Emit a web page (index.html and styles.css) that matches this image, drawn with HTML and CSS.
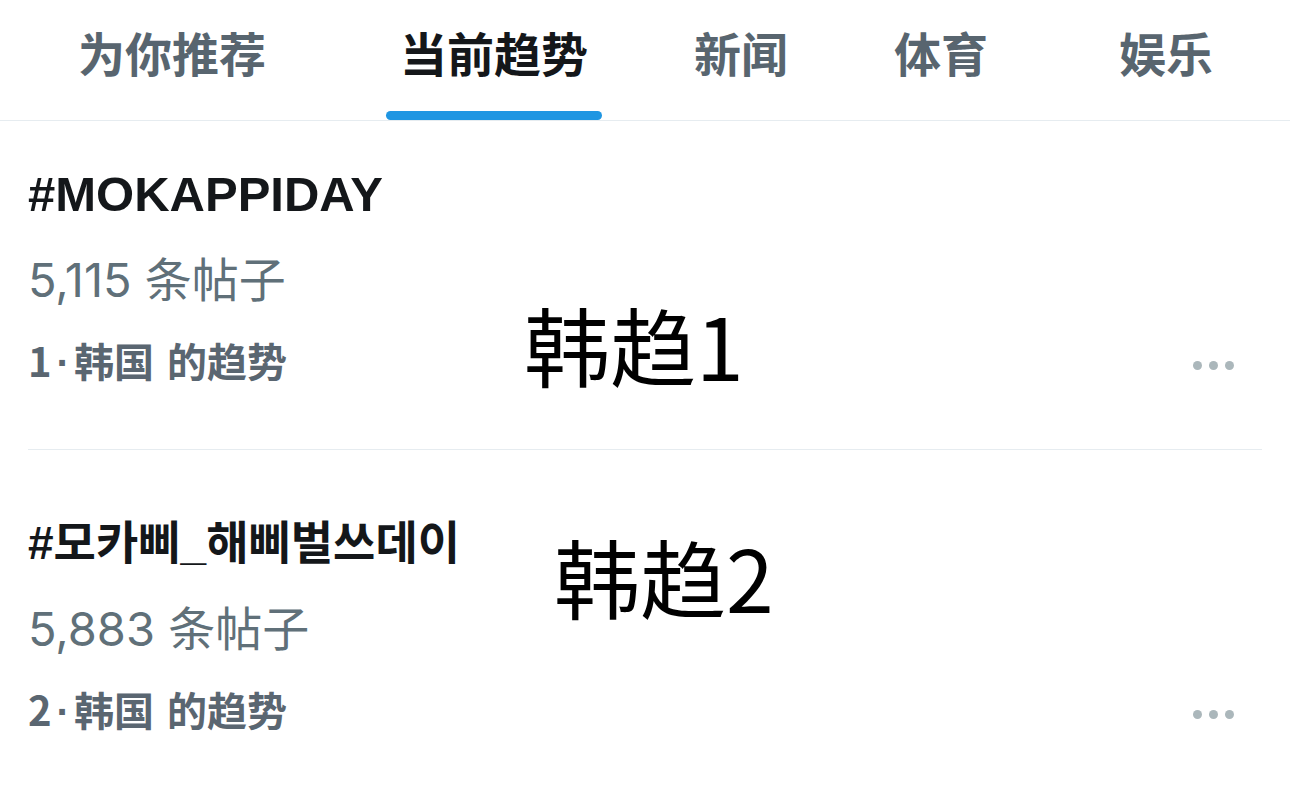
FILE: index.html
```html
<!DOCTYPE html>
<html lang="zh-CN">
<head>
<meta charset="utf-8">
<title>当前趋势</title>
<link rel="stylesheet" href="styles.css">
</head>
<body>
<nav class="tabbar">
  <div class="tab tab-first"><span class="tab-label">为你推荐</span></div>
  <div class="tab tab-active"><span class="tab-label">当前趋势</span><span class="tab-indicator"></span></div>
  <div class="tab"><span class="tab-label">新闻</span></div>
  <div class="tab"><span class="tab-label">体育</span></div>
  <div class="tab tab-last"><span class="tab-label">娱乐</span></div>
</nav>
<main class="trends">
  <section class="trend">
    <div class="trend-title">#MOKAPPIDAY</div>
    <div class="trend-count">5,115 条帖子</div>
    <div class="trend-meta">
      <span class="trend-rank">1<span class="sep">·</span>韩国 的趋势</span>
      <span class="more"><i class="dot"></i><i class="dot"></i><i class="dot"></i></span>
    </div>
    <div class="note note-1">韩趋1</div>
  </section>
  <section class="trend">
    <div class="trend-title trend-title-ko">#모카삐_해삐벌쓰데이</div>
    <div class="trend-count">5,883 条帖子</div>
    <div class="trend-meta">
      <span class="trend-rank">2<span class="sep">·</span>韩国 的趋势</span>
      <span class="more"><i class="dot"></i><i class="dot"></i><i class="dot"></i></span>
    </div>
    <div class="note note-2">韩趋2</div>
  </section>
</main>
</body>
</html>
```
FILE: styles.css
```css
html, body {
  margin: 0;
  padding: 0;
  background: #ffffff;
}

body {
  width: 1290px;
  height: 789px;
  overflow: hidden;
  font-family: "Noto Sans CJK SC", "Liberation Sans", sans-serif;
  color: #14171a;
}

.tabbar {
  display: flex;
  gap: 78px;
  padding-left: 64px;
  height: 120px;
  border-bottom: 1px solid #e6ecf0;
}

.tab {
  display: flex;
  flex-direction: column;
  align-items: stretch;
  padding: 28px 14px 0;
  box-sizing: border-box;
  height: 120px;
}

.tab-first {
  margin-right: 28px;
}

.tab-last {
  margin-left: 25px;
}

.tab-label {
  font-family: "Noto Sans CJK SC", sans-serif;
  font-weight: 700;
  font-size: 47px;
  line-height: 47px;
  color: #58656f;
  white-space: nowrap;
  text-align: center;
}

.tab-active .tab-label {
  color: #14171a;
}

.tab-indicator {
  display: block;
  margin: auto -14px 0;
  height: 9px;
  border-radius: 5px;
  background: #1f96e2;
}

.trends {
  display: flex;
  flex-direction: column;
}

.trend {
  position: relative;
  margin: 0 28px;
  padding: 45px 0 60px;
  border-bottom: 1px solid #e6ecf0;
}

.trend + .trend {
  padding-top: 65px;
}

.trend-title {
  font-family: "Liberation Sans", "Noto Sans CJK KR", sans-serif;
  font-weight: 700;
  font-size: 49px;
  line-height: 56px;
  color: #14171a;
  white-space: nowrap;
}

.trend-title-ko {
  font-size: 46px;
}

.trend-count {
  margin-top: 30px;
  font-family: "Inter", "Noto Sans CJK SC", sans-serif;
  font-weight: 400;
  font-size: 47px;
  line-height: 56px;
  color: #607079;
  white-space: nowrap;
}

.trend-meta {
  margin-top: 25px;
  display: flex;
  align-items: center;
  justify-content: space-between;
  height: 56px;
}

.trend-rank {
  font-family: "Noto Sans CJK SC", sans-serif;
  font-weight: 700;
  font-size: 40px;
  line-height: 56px;
  word-spacing: 4px;
  color: #5a6671;
  white-space: nowrap;
}

.sep {
  font-family: "Liberation Sans", sans-serif;
  padding: 0 4px 0 5px;
}

.more {
  display: flex;
  gap: 7px;
  margin-right: 28px;
  margin-top: 9px;
}

.dot {
  display: block;
  width: 9px;
  height: 9px;
  border-radius: 50%;
  background: #abb7bb;
}

.note {
  position: absolute;
  font-family: "Noto Sans CJK SC", sans-serif;
  font-weight: 400;
  font-size: 86px;
  line-height: 86px;
  color: #000000;
  white-space: nowrap;
}

.note-1 {
  left: 496px;
  top: 180px;
}

.note-2 {
  left: 526px;
  top: 83px;
}
```
